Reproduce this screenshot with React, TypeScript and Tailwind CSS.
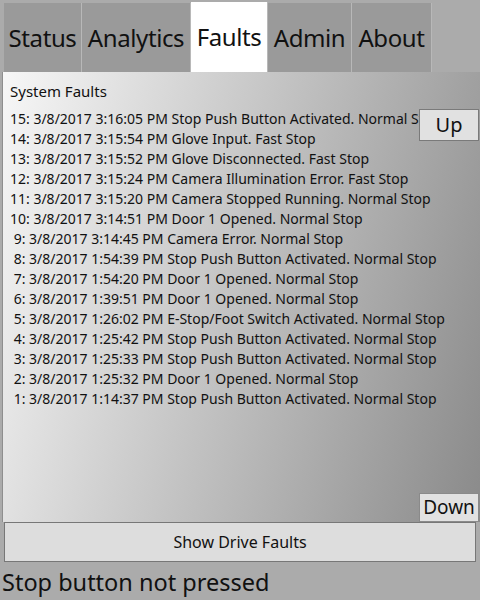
const tabs = [
  { label: 'Status', w: 'w-[78px]' },
  { label: 'Analytics', w: 'w-[109px]' },
  { label: 'Faults', w: 'w-[77px]' },
  { label: 'Admin', w: 'w-[84px]' },
  { label: 'About', w: 'w-[80px]' },
];

const faults = [
  '15: 3/8/2017 3:16:05 PM Stop Push Button Activated. Normal Stop',
  '14: 3/8/2017 3:15:54 PM Glove Input. Fast Stop',
  '13: 3/8/2017 3:15:52 PM Glove Disconnected. Fast Stop',
  '12: 3/8/2017 3:15:24 PM Camera Illumination Error. Fast Stop',
  '11: 3/8/2017 3:15:20 PM Camera Stopped Running. Normal Stop',
  '10: 3/8/2017 3:14:51 PM Door 1 Opened. Normal Stop',
  ' 9: 3/8/2017 3:14:45 PM Camera Error. Normal Stop',
  ' 8: 3/8/2017 1:54:39 PM Stop Push Button Activated. Normal Stop',
  ' 7: 3/8/2017 1:54:20 PM Door 1 Opened. Normal Stop',
  ' 6: 3/8/2017 1:39:51 PM Door 1 Opened. Normal Stop',
  ' 5: 3/8/2017 1:26:02 PM E-Stop/Foot Switch Activated. Normal Stop',
  ' 4: 3/8/2017 1:25:42 PM Stop Push Button Activated. Normal Stop',
  ' 3: 3/8/2017 1:25:33 PM Stop Push Button Activated. Normal Stop',
  ' 2: 3/8/2017 1:25:32 PM Door 1 Opened. Normal Stop',
  ' 1: 3/8/2017 1:14:37 PM Stop Push Button Activated. Normal Stop',
];

export default function App() {
  return (
    <div className="w-[480px] h-[600px] overflow-hidden bg-[#ababab] flex flex-col text-[#111] font-['Noto_Sans',sans-serif]">
      {/* tab strip */}
      <div className="flex h-[72px] pl-[4px] items-end">
        {tabs.map((t) => (
          <div
            key={t.label}
            className={
              t.label === 'Faults'
                ? `${t.w} h-[70px] bg-white flex items-center justify-center text-[24px] tracking-[-0.4px] border-r border-[#b8b8b8]`
                : `${t.w} h-[69px] bg-[#9a9a9a] flex items-center justify-center text-[24px] tracking-[-0.4px] border-r border-[#b8b8b8]`
            }
          >
            {t.label}
          </div>
        ))}
      </div>

      {/* faults panel */}
      <div className="relative ml-[2px] h-[450px] flex flex-col border-l border-[#8e8e8e] bg-linear-[105deg] from-[#f7f7f7] to-[#8a8a8a]">
        <div className="pl-[7px] pt-[9px] text-[15px] leading-[20px]">System Faults</div>
        <div className="pl-[7px] pt-[8px] text-[14px] leading-[20px] whitespace-pre overflow-hidden">
          {faults.map((f) => (
            <div key={f}>{f}</div>
          ))}
        </div>
        {/* sits over the first row, as in the app */}
        <button className="absolute left-[416px] top-[37px] w-[60px] h-[32px] bg-[#e1e1e1] border border-[#7a7a7a] text-[20px] leading-none">
          Up
        </button>
        <div className="mt-auto flex justify-end pr-[1px]">
          <button className="w-[60px] h-[29px] bg-[#e1e1e1] border border-[#8a8a8a] text-[19px] leading-none">
            Down
          </button>
        </div>
      </div>

      <button className="mx-[4px] h-[40px] bg-[#dddddd] border border-[#777777] text-[16px]">
        Show Drive Faults
      </button>

      <div className="pl-[2px] pt-[3px] h-[38px] flex items-center text-[23.5px]">
        Stop button not pressed
      </div>
    </div>
  );
}
